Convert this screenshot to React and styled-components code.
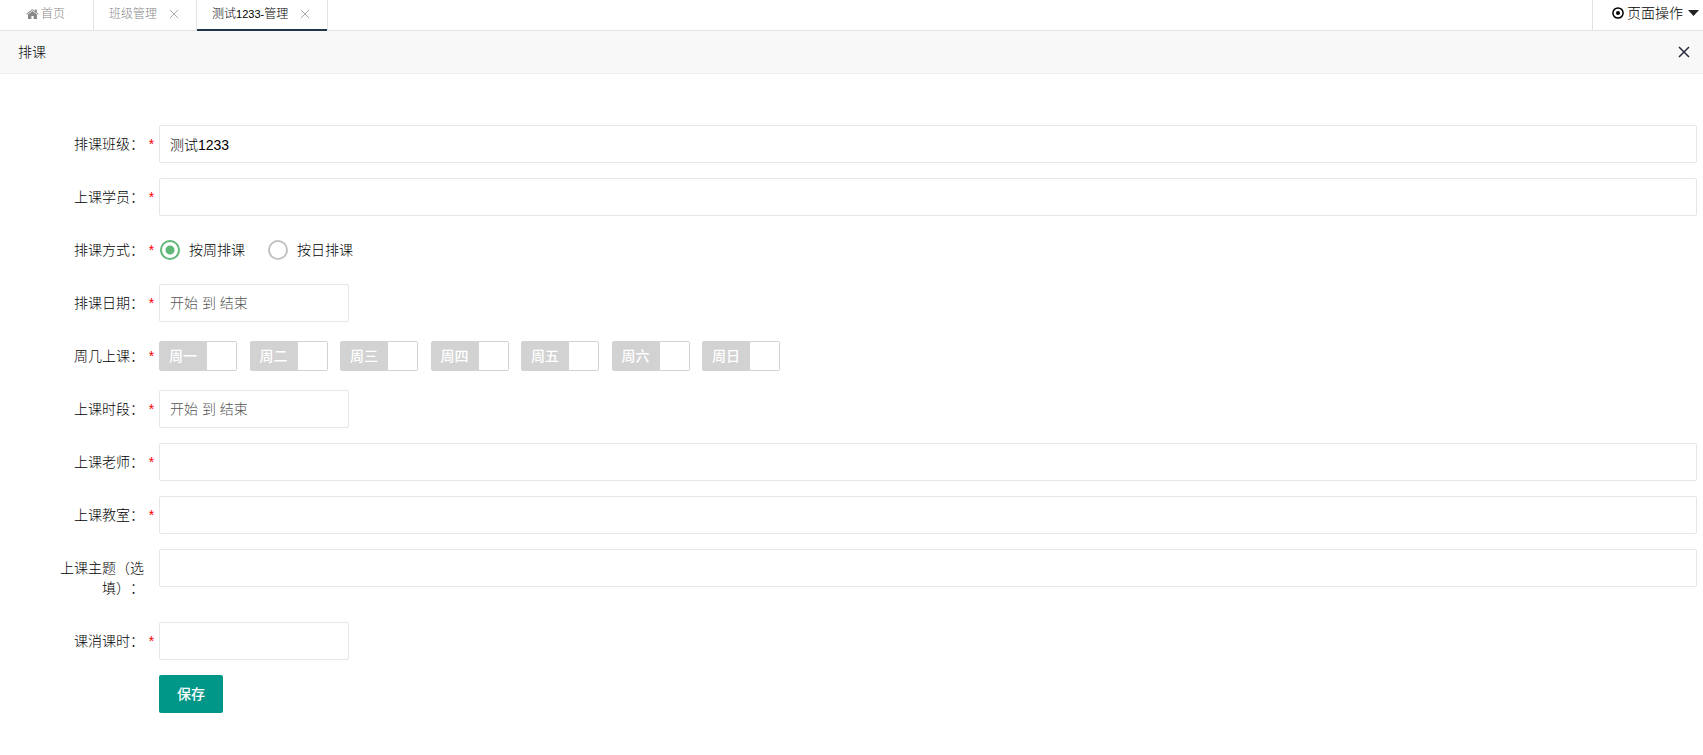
import React from 'react';
import styled, { createGlobalStyle } from 'styled-components';

const GlobalStyle = createGlobalStyle`
  * {
    box-sizing: border-box;
  }

  body {
    background-color: #fff;
    color: #000;
    font-family: 'Liberation Sans', 'Noto Sans CJK SC', sans-serif;
    font-size: 14px;
    font-weight: 300;
    line-height: 20px;
    margin: 0;
    text-spacing-trim: space-all;
  }

  button,
  input {
    font-family: inherit;
    font-size: 14px;
    font-weight: inherit;
    line-height: 20px;
  }
`;

const TopBar = styled.header`
  border-bottom: 1px solid #e2e2e2;
  display: flex;
  height: 31px;
  justify-content: space-between;
`;

const Tabs = styled.nav`
  display: flex;
`;

const Tab = styled.div`
  align-items: center;
  border-right: 1px solid #e2e2e2;
  display: flex;
  font-size: 12px;
  gap: 12px;
  margin-bottom: -1px;
  padding: 0 17px 4px 15px;
  ${({ $active }) => $active && 'box-shadow: inset 0 -2px #20364a;'}
`;

const HomeTab = styled(Tab)`
  padding: 0 28px 4px 26px;
`;

const TabLink = styled.a`
  align-items: center;
  color: ${({ $active }) => ($active ? '#000' : '#888')};
  display: flex;
  gap: 2px;
  text-decoration: none;

  b {
    font-size: 11px;
  }
`;

const IconButton = styled.button`
  background: none;
  border: 0;
  color: ${({ $color }) => $color};
  display: flex;
  padding: 0;
`;

const PageActions = styled.button`
  align-items: center;
  background: none;
  border: 0;
  border-left: 1px solid #e2e2e2;
  color: #000;
  display: flex;
  gap: 3px;
  padding: 0 4px 4px 19px;
`;

const Caret = styled.svg`
  margin-left: 2px;
`;

const TitleBar = styled.div`
  align-items: center;
  background-color: #f8f8f8;
  border-bottom: 1px solid #eee;
  display: flex;
  height: 43px;
  justify-content: space-between;
  padding: 0 13px 0 18px;
`;

const Title = styled.h1`
  font-size: 14px;
  font-weight: inherit;
  margin: 0;
`;

const Form = styled.form`
  padding: 51px 6px 40px 39px;
`;

const Row = styled.div`
  display: grid;
  grid-template-columns: 105px 15px 1fr;
  margin-bottom: 15px;
`;

const Label = styled.label`
  padding: 9px 0 9px 15px;
  text-align: right;
`;

const Required = styled.span`
  color: #f00;
  padding: 9px 0;
  text-align: center;
`;

const Field = styled.div`
  align-items: center;
  display: flex;
  grid-column: 3;
  height: 38px;
`;

const Input = styled.input`
  background-color: #fff;
  border: 1px solid #e6e6e6;
  border-radius: 2px;
  color: #000;
  height: 38px;
  padding: 0 10px;
  width: ${({ $short }) => ($short ? '190px' : '100%')};

  &::placeholder {
    color: #555;
    opacity: 1;
  }
`;

const RadioLabel = styled.label`
  align-items: center;
  display: flex;
  gap: 9px;
  margin-right: 22px;
  padding-left: 1px;
`;

const Radio = styled.input`
  appearance: none;
  border: 2px solid #c2c2c2;
  border-radius: 50%;
  height: 20px;
  margin: 0;
  width: 20px;

  &:checked {
    background: radial-gradient(circle, #5fb878 4px, #fff 5px);
    border-color: #5fb878;
  }
`;

const Days = styled.div`
  display: flex;
  justify-content: space-between;
  width: 621px;
`;

const Day = styled.label`
  background-color: #d2d2d2;
  border: 1px solid #d2d2d2;
  border-radius: 2px;
  color: #fff;
  display: flex;
  font-weight: 500;
  height: 30px;
  line-height: 28px;
  width: 78px;

  span {
    flex: 1;
    padding-left: 9px;
  }
`;

const DayCheckbox = styled.input`
  appearance: none;
  background-color: #fff;
  height: 28px;
  margin: 0;
  order: 1;
  width: 29px;

  &:checked {
    order: -1;
  }
`;

const SaveButton = styled.button`
  background-color: #009688;
  border: 0;
  border-radius: 2px;
  color: #fff;
  font-weight: 500;
  height: 38px;
  padding: 0 18px;
`;

const days = ['周一', '周二', '周三', '周四', '周五', '周六', '周日'];

function CrossIcon({ size, width }) {
  return (
    <svg fill="none" height={size} stroke="currentColor" strokeWidth={width} viewBox="0 0 12 12" width={size}>
      <path d="M1 1 11 11M11 1 1 11" />
    </svg>
  );
}

function HomeIcon() {
  return (
    <svg fill="currentColor" height="12" viewBox="0 0 13 12" width="13">
      <path d="M6.5 2.9 11 6.6V10.5a.5.5 0 0 1-.5.5H7.6V7.9H5.4V11H2.5a.5.5 0 0 1-.5-.5V6.6Z" />
      <path d="M.3 6.1 5.8 1.5a1.1 1.1 0 0 1 1.4 0L9.1 3.1V1.6h1.7V4.5l1.9 1.6-.6.7L6.5 2.1.9 6.8Z" />
    </svg>
  );
}

function TargetIcon() {
  return (
    <svg fill="none" height="12" viewBox="0 0 12 12" width="12">
      <circle cx="6" cy="6" r="5.1" stroke="#000" strokeWidth="1.5" />
      <circle cx="6" cy="6" fill="#000" r="2" />
    </svg>
  );
}

function FormRow({ children, id, label, optional }) {
  return (
    <Row>
      <Label as={id ? 'label' : 'span'} htmlFor={id}>
        {label}
      </Label>
      {!optional && <Required>*</Required>}
      <Field>{children}</Field>
    </Row>
  );
}

export default function App() {
  return (
    <>
      <GlobalStyle />
      <TopBar>
        <Tabs>
          <HomeTab>
            <TabLink href="#home">
              <HomeIcon />
              首页
            </TabLink>
          </HomeTab>
          <Tab>
            <TabLink href="#classes">班级管理</TabLink>
            <IconButton $color="#aaa" aria-label="关闭" type="button">
              <CrossIcon size={10} width={1.2} />
            </IconButton>
          </Tab>
          <Tab $active>
            <TabLink $active href="#manage">
              <span>
                测试<b>1233-</b>管理
              </span>
            </TabLink>
            <IconButton $color="#aaa" aria-label="关闭" type="button">
              <CrossIcon size={10} width={1.2} />
            </IconButton>
          </Tab>
        </Tabs>
        <PageActions type="button">
          <TargetIcon />
          页面操作
          <Caret fill="#222" height="6" viewBox="0 0 11 6" width="11">
            <path d="M0 0h11L5.5 6Z" />
          </Caret>
        </PageActions>
      </TopBar>
      <TitleBar>
        <Title>排课</Title>
        <IconButton $color="#2b2b3a" aria-label="关闭" type="button">
          <CrossIcon size={12} width={1.5} />
        </IconButton>
      </TitleBar>
      <Form>
        <FormRow id="class" label="排课班级：">
          <Input defaultValue="测试1233" id="class" />
        </FormRow>
        <FormRow id="students" label="上课学员：">
          <Input id="students" />
        </FormRow>
        <FormRow label="排课方式：">
          <RadioLabel>
            <Radio defaultChecked name="mode" type="radio" />
            按周排课
          </RadioLabel>
          <RadioLabel>
            <Radio name="mode" type="radio" />
            按日排课
          </RadioLabel>
        </FormRow>
        <FormRow id="date" label="排课日期：">
          <Input $short id="date" placeholder="开始 到 结束" />
        </FormRow>
        <FormRow label="周几上课：">
          <Days>
            {days.map(day => (
              <Day key={day}>
                <DayCheckbox type="checkbox" />
                <span>{day}</span>
              </Day>
            ))}
          </Days>
        </FormRow>
        <FormRow id="time" label="上课时段：">
          <Input $short id="time" placeholder="开始 到 结束" />
        </FormRow>
        <FormRow id="teacher" label="上课老师：">
          <Input id="teacher" />
        </FormRow>
        <FormRow id="room" label="上课教室：">
          <Input id="room" />
        </FormRow>
        <FormRow id="topic" label="上课主题（选填）：" optional>
          <Input id="topic" />
        </FormRow>
        <FormRow id="hours" label="课消课时：">
          <Input $short id="hours" />
        </FormRow>
        <Row>
          <Field>
            <SaveButton type="button">保存</SaveButton>
          </Field>
        </Row>
      </Form>
    </>
  );
}
